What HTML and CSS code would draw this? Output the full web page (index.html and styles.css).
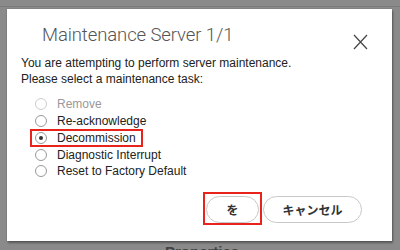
FILE: index.html
```html
<!DOCTYPE html>
<html>
<head>
<meta charset="utf-8">
<link rel="stylesheet" href="styles.css">
</head>
<body>
<div class="backdrop">
  <div class="bgline"></div>
  <div class="dialog">
    <div class="header">
      <h1 class="title">Maintenance Server 1/1</h1>
      <svg class="close" width="15" height="16" viewBox="0 0 15 16"><path d="M1 1L14 15M14 1L1 15" stroke="#444" stroke-width="1.2" fill="none"/></svg>
    </div>
    <p class="msg">You are attempting to perform server maintenance.<br>Please select a maintenance task:</p>
    <ul class="options">
      <li class="opt disabled"><span class="radio"></span>Remove</li>
      <li class="opt"><span class="radio"></span>Re-acknowledge</li>
      <li class="opt"><span class="hl"><span class="radio checked"></span>Decommission</span></li>
      <li class="opt"><span class="radio"></span>Diagnostic Interrupt</li>
      <li class="opt"><span class="radio"></span>Reset to Factory Default</li>
    </ul>
    <div class="footer">
      <span class="hlbtn"><button class="btn ok">を</button></span>
      <button class="btn cancel">キャンセル</button>
    </div>
  </div>
  <div class="props">Properties</div>
</div>
</body>
</html>
```
FILE: styles.css
```css
html, body {
  margin: 0;
  padding: 0;
}
body {
  width: 400px;
  height: 250px;
  overflow: hidden;
  background: #8a8a8a;
  font-family: "Liberation Sans", Arial, sans-serif;
}
.backdrop {
  display: flex;
  flex-direction: column;
}
.bgline {
  height: 1px;
  margin-top: 6px;
  background: #7a7a7a;
}
.dialog {
  margin: 2px 0 0 7px;
  width: 385px;
  height: 232px;
  background: #fff;
  box-shadow: 1px 2px 2px rgba(0,0,0,0.35), 0 0 1px rgba(0,0,0,0.3);
  box-sizing: border-box;
  padding: 0 0 0 14px;
  display: flex;
  flex-direction: column;
}
.header {
  display: flex;
  align-items: flex-start;
  justify-content: space-between;
  padding: 15px 24px 0 21px;
}
.title {
  margin: 0;
  font-family: "Roboto", sans-serif;
  font-weight: 300;
  font-size: 18.5px;
  line-height: 22px;
  color: #555;
  letter-spacing: -0.1px;
}
.close {
  margin-top: 10px;
  display: block;
}
.msg {
  margin: 5px 0 0 0;
  font-size: 12px;
  line-height: 16px;
  color: #222;
}
.options {
  list-style: none;
  margin: 9px 0 0 14px;
  padding: 0;
}
.opt {
  display: flex;
  align-items: center;
  height: 16.75px;
  font-size: 12px;
  color: #222;
}
.opt.disabled {
  color: #999;
}
.radio {
  width: 12px;
  height: 12px;
  border: 1px solid #999;
  border-radius: 50%;
  box-sizing: border-box;
  margin-right: 10px;
  position: relative;
  background: #fff;
  flex: none;
}
.disabled .radio {
  border-color: #ccc;
}
.radio.checked::after {
  content: "";
  position: absolute;
  left: 3px;
  top: 3px;
  width: 4px;
  height: 4px;
  border-radius: 50%;
  background: #333;
}
.hl {
  display: flex;
  align-items: center;
  margin-left: -5px;
  padding: 0 5px 0 3px;
  border: 2px solid #e8231b;
  box-sizing: border-box;
  height: 18px;
}
.footer {
  display: flex;
  align-items: flex-start;
  margin: 12px 0 0 182px;
  gap: 1px;
}
.hlbtn {
  display: flex;
  padding: 2px 1px 0 1px;
  border: 2px solid #e8231b;
  height: 33px;
  box-sizing: border-box;
  align-items: flex-start;
}
.btn {
  height: 27px;
  border: 1px solid #c8c8c8;
  border-radius: 14px;
  background: #fff;
  font-family: "Noto Sans CJK JP", sans-serif;
  font-weight: 700;
  font-size: 12px;
  color: #333;
  padding: 0;
  margin: 0;
}
.ok {
  width: 53px;
}
.cancel {
  width: 99px;
  margin-top: 4px;
}
.props {
  margin: 2px 0 0 165px;
  font-size: 15px;
  font-weight: 700;
  color: #444;
  line-height: 18px;
}
```
